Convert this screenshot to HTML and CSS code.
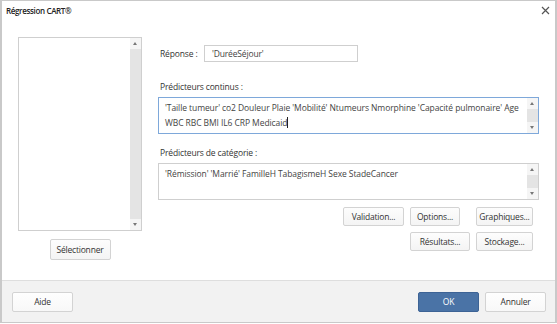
FILE: index.html
```html
<!DOCTYPE html>
<html lang="fr">
<head>
  <meta charset="UTF-8">
  <title>Régression CART®</title>
  <link rel="stylesheet" href="styles.css">
</head>
<body>
  <div class="dialog">
    <div class="titlebar">
      <span class="title">Régression CART®</span>
      <span class="close">
        <svg width="9" height="9" viewBox="0 0 9 9"><path d="M1 1 L8 8 M8 1 L1 8" stroke="#555" stroke-width="1.2"/></svg>
      </span>
    </div>

    <div class="main">
      <div class="left">
        <div class="listbox">
          <div class="list-body"></div>
          <div class="scrollbar">
            <div class="arrow up"></div>
            <div class="track"></div>
            <div class="arrow down"></div>
          </div>
        </div>
        <button class="btn btn-select">Sélectionner</button>
      </div>

      <div class="right">
        <div class="row-response">
          <label class="label">Réponse :</label>
          <div class="input">'DuréeSéjour'</div>
        </div>

        <div class="label field-label">Prédicteurs continus :</div>
        <div class="textbox focused">
          <div class="textbox-text">'Taille tumeur' co2 Douleur Plaie 'Mobilité' Ntumeurs Nmorphine 'Capacité pulmonaire' Age WBC RBC BMI IL6 CRP Medicaid<span class="caret"></span></div>
          <div class="scrollbar">
            <div class="arrow up"></div>
            <div class="track"></div>
            <div class="arrow down"></div>
          </div>
        </div>

        <div class="label field-label cat">Prédicteurs de catégorie :</div>
        <div class="textbox">
          <div class="textbox-text">'Rémission' 'Marrié' FamilleH TabagismeH Sexe StadeCancer</div>
          <div class="scrollbar">
            <div class="arrow up"></div>
            <div class="track"></div>
            <div class="arrow down"></div>
          </div>
        </div>

        <div class="actions">
          <button class="btn w61">Validation...</button>
          <button class="btn w50">Options...</button>
          <button class="btn w57">Graphiques...</button>
          <span></span>
          <button class="btn w60">Résultats...</button>
          <button class="btn w57">Stockage...</button>
        </div>
      </div>
    </div>

    <div class="footer">
      <button class="btn btn-footer">Aide</button>
      <div class="footer-right">
        <button class="btn btn-footer btn-ok">OK</button>
        <button class="btn btn-footer">Annuler</button>
      </div>
    </div>
  </div>
</body>
</html>
```

FILE: styles.css
```css
body {
  margin: 0;
  font-family: "Open Sans", "Noto Sans", sans-serif;
  color: #333;
  background: #fff;
}

.dialog {
  width: 557px;
  height: 323px;
  box-sizing: border-box;
  border: 1px solid #c9c9c9;
  border-left: 2px solid #c9c9c9;
  border-right: 2px solid #c9c9c9;
  display: flex;
  flex-direction: column;
  background: #fff;
}

.titlebar {
  height: 24px;
  display: flex;
  align-items: center;
  justify-content: space-between;
  padding: 0 3px 6px 4px;
  box-sizing: border-box;
}

.title {
  font-size: 8px;
  font-weight: 600;
  letter-spacing: -0.35px;
  color: #222;
}

.close {
  display: flex;
  margin-right: 2px;
}

.main {
  flex: 1;
  display: flex;
  padding-top: 12px;
}

.left {
  margin-left: 16px;
  width: 124px;
  display: flex;
  flex-direction: column;
  align-items: center;
}

.listbox {
  width: 124px;
  height: 194px;
  box-sizing: border-box;
  border: 1px solid #cfcfcf;
  display: flex;
}

.list-body {
  flex: 1;
}

.scrollbar {
  width: 11px;
  display: flex;
  flex-direction: column;
  background: #f5f5f5;
}

.track {
  flex: 1;
  background: #e4e4e4;
}

.arrow {
  height: 11px;
  position: relative;
  background: #f5f5f5;
}

.arrow::after {
  content: "";
  position: absolute;
  left: 3px;
  top: 4px;
  border-left: 2.5px solid transparent;
  border-right: 2.5px solid transparent;
}

.arrow.up::after {
  border-bottom: 3px solid #777;
}

.arrow.down::after {
  border-top: 3px solid #777;
}

.btn {
  font-family: "Open Sans", "Noto Sans", sans-serif;
  font-size: 8.5px;
  letter-spacing: -0.2px;
  color: #333;
  background: linear-gradient(#fdfdfd, #f4f4f4);
  border: 1px solid #d3d3d3;
  border-radius: 2px;
  height: 19px;
  padding: 0;
  box-sizing: border-box;
}

.btn-select {
  margin-top: 8px;
  width: 61px;
  height: 21px;
}

.right {
  margin-left: 16px;
  width: 381px;
  padding-top: 8px;
}

.label {
  font-size: 8.5px;
  letter-spacing: -0.15px;
  color: #333;
}

.row-response {
  display: flex;
  align-items: center;
  height: 17px;
}

.row-response .label {
  width: 44px;
  padding-left: 2px;
}

.input {
  width: 154px;
  height: 17px;
  box-sizing: border-box;
  border: 1px solid #cfcfcf;
  font-size: 8.5px;
  letter-spacing: -0.15px;
  color: #444;
  padding-left: 7px;
  line-height: 15px;
}

.field-label {
  height: 12px;
  line-height: 12px;
  margin-top: 19px;
  margin-bottom: 4px;
  padding-left: 2px;
}

.field-label.cat {
  margin-top: 13px;
}

.textbox {
  height: 37px;
  box-sizing: border-box;
  border: 1px solid #cfcfcf;
  display: flex;
}

.textbox.focused {
  border-color: #7ea8da;
}

.textbox-text {
  flex: 1;
  font-size: 8.5px;
  letter-spacing: -0.08px;
  line-height: 15px;
  color: #444;
  padding: 2px 8px 0 6px;
}

.caret {
  display: inline-block;
  width: 1px;
  height: 11px;
  background: #222;
  vertical-align: -2px;
}

.actions {
  margin-top: 7px;
  display: grid;
  grid-template-columns: 61px 60px 57px;
  justify-content: end;
  column-gap: 6px;
  row-gap: 6px;
  margin-right: 6px;
}

.w61 { width: 61px; }
.w60 { width: 60px; }
.w57 { width: 57px; }
.w50 { width: 50px; }

.footer {
  height: 42px;
  box-sizing: border-box;
  border-top: 1px solid #dedede;
  background: #f2f2f2;
  display: flex;
  align-items: center;
  justify-content: space-between;
  padding: 0 9px 0 10px;
}

.footer-right {
  display: flex;
  gap: 6px;
}

.btn-footer {
  width: 61px;
  height: 20px;
  background: linear-gradient(#fefefe, #f8f8f8);
}

.btn-ok {
  background: #4a73a6;
  border-color: #3d6395;
  color: #fff;
}
```
